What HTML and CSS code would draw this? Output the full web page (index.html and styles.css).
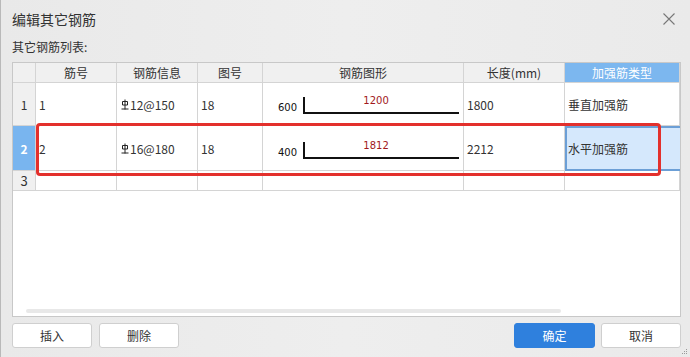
FILE: index.html
```html
<!DOCTYPE html>
<html lang="zh">
<head>
<meta charset="utf-8">
<link rel="stylesheet" href="styles.css">
</head>
<body>
<div class="dialog">
  <div class="titlebar">
    <span class="title">编辑其它钢筋</span>
    <svg class="close" width="12" height="12" viewBox="0 0 12 12"><path d="M0.5 0.5 L11.5 11.5 M11.5 0.5 L0.5 11.5" stroke="#777" stroke-width="1.1" fill="none"/></svg>
  </div>
  <div class="label">其它钢筋列表:</div>
  <div class="table">
    <div class="grid">
      <div class="c hd"></div>
      <div class="c hd">筋号</div>
      <div class="c hd">钢筋信息</div>
      <div class="c hd">图号</div>
      <div class="c hd">钢筋图形</div>
      <div class="c hd">长度(mm)</div>
      <div class="c hd hd-sel">加强筋类型</div>

      <div class="c rh r1">1</div>
      <div class="c r1">1</div>
      <div class="c r1 info"><svg class="sym" width="8" height="11" viewBox="0 0 8 11"><path d="M4 0.5 V10.5 M1.5 2.5 H6.5 V6 H1.5 Z M0.5 10 H7.5" stroke="#222" stroke-width="1" fill="none"/></svg>12@150</div>
      <div class="c r1">18</div>
      <div class="c r1 shape"><span class="len">600</span><span class="bar"><span class="red">1200</span></span></div>
      <div class="c r1">1800</div>
      <div class="c r1">垂直加强筋</div>

      <div class="c rh rh-sel r2">2</div>
      <div class="c r2">2</div>
      <div class="c r2 info"><svg class="sym" width="8" height="11" viewBox="0 0 8 11"><path d="M4 0.5 V10.5 M1.5 2.5 H6.5 V6 H1.5 Z M0.5 10 H7.5" stroke="#222" stroke-width="1" fill="none"/></svg>16@180</div>
      <div class="c r2">18</div>
      <div class="c r2 shape"><span class="len">400</span><span class="bar"><span class="red">1812</span></span></div>
      <div class="c r2">2212</div>
      <div class="c r2 sel">水平加强筋</div>

      <div class="c rh r3">3</div>
      <div class="c r3"></div>
      <div class="c r3"></div>
      <div class="c r3"></div>
      <div class="c r3"></div>
      <div class="c r3"></div>
      <div class="c r3"></div>
    </div>
    <div class="mark"></div>
    <div class="hscroll"></div>
  </div>
  <div class="buttons">
    <div class="group">
      <button class="btn">插入</button>
      <button class="btn">删除</button>
    </div>
    <div class="group right">
      <button class="btn primary">确定</button>
      <button class="btn">取消</button>
    </div>
  </div>
  <svg class="grip" width="6" height="6" viewBox="0 0 6 6"><g fill="#9a9a9a"><rect x="4" y="0" width="1" height="1"/><rect x="2" y="2" width="1" height="1"/><rect x="4" y="2" width="1" height="1"/><rect x="0" y="4" width="1" height="1"/><rect x="2" y="4" width="1" height="1"/><rect x="4" y="4" width="1" height="1"/></g></svg>
</div>
</body>
</html>
```
FILE: styles.css
```css
html, body {
  margin: 0;
  padding: 0;
}
body {
  font-family: "Noto Sans CJK SC", "Noto Sans", sans-serif;
  font-size: 12px;
  color: #333;
  background: #ebebeb;
}
.dialog {
  position: relative;
  width: 690px;
  height: 357px;
  box-sizing: border-box;
  border-left: 1px solid #b9b9b9;
  padding: 0 9px 0 11px;
  background: linear-gradient(90deg, #e9e9e9, #eeeeee 50%, #eaeaea);
}
.titlebar {
  height: 38px;
  display: flex;
  align-items: center;
  justify-content: space-between;
}
.title {
  font-size: 14px;
  color: #333;
}
.close {
  margin-right: 6px;
}
.label {
  height: 18px;
  line-height: 18px;
  margin-bottom: 6px;
}
.table {
  position: relative;
  height: 255px;
  box-sizing: border-box;
  border: 1px solid #c8c8c8;
  background: #fff;
}
.grid {
  display: grid;
  grid-template-columns: 23px 81px 81px 65px 201px 101px 115px;
  grid-template-rows: 20px 43px 45px 20px;
}
.c {
  box-sizing: border-box;
  border-right: 1px solid #d4d4d4;
  border-bottom: 1px solid #d4d4d4;
  display: flex;
  align-items: center;
  padding-left: 3px;
  white-space: nowrap;
}
.hd {
  background: #f0f0f0;
  justify-content: center;
  padding-left: 0;
  line-height: 1;
}
.hd-sel {
  background: #7cb7ef;
  color: #fff;
}
.rh {
  background: #f0f0f0;
  justify-content: center;
  padding-left: 0;
  font-size: 13px;
}
.rh-sel {
  background: #79b5ef;
  color: #fff;
  font-weight: bold;
}
.r1, .r2 {
  font-size: 12px;
}
.info {
  padding-left: 4px;
}
.sym {
  align-self: flex-start;
  margin-top: 16px;
  margin-right: 1px;
}
.r2 .sym {
  margin-top: 17px;
}
.shape {
  padding-left: 15px;
  align-items: flex-end;
}
.r1.shape { padding-bottom: 11px; }
.r2.shape { padding-bottom: 11px; }
.len {
  font-family: "DejaVu Sans", sans-serif;
  font-size: 10px;
  color: #111;
  line-height: 10px;
  margin-bottom: 1px;
  margin-right: 6px;
}
.bar {
  width: 154px;
  height: 15px;
  border-left: 2px solid #111;
  border-bottom: 2px solid #111;
  display: flex;
  justify-content: center;
  align-items: flex-start;
}
.red {
  font-family: "DejaVu Sans", sans-serif;
  font-size: 10px;
  color: #a1191c;
  line-height: 10px;
  margin-top: -1px;
  margin-left: -12px;
}
.sel {
  background: #d5e8fc;
  border: 2px solid #6c9fd6;
  border-right: none;
  padding-left: 1px;
}
.mark {
  position: absolute;
  left: 23px;
  top: 60px;
  width: 625px;
  height: 53px;
  box-sizing: border-box;
  border: 3px solid #e3302c;
  border-radius: 4px;
}
.hscroll {
  position: absolute;
  left: 13px;
  top: 246px;
  width: 535px;
  height: 4px;
  border-radius: 2px;
  background: #e8e8e8;
}
.buttons {
  margin-top: 6px;
  display: flex;
  justify-content: space-between;
}
.group {
  display: flex;
  gap: 7px;
}
.group.right {
  gap: 6px;
}
.btn {
  width: 80px;
  height: 25px;
  box-sizing: border-box;
  border: 1px solid #cfcfcf;
  border-radius: 3px;
  background: #fff;
  font-family: "Noto Sans CJK SC", sans-serif;
  font-size: 12px;
  color: #333;
  padding: 0;
}
.btn.primary {
  width: 81px;
  background: #2f80dd;
  border-color: #2f80dd;
  color: #fff;
}
.grip {
  position: absolute;
  right: 2px;
  bottom: 2px;
}
```
